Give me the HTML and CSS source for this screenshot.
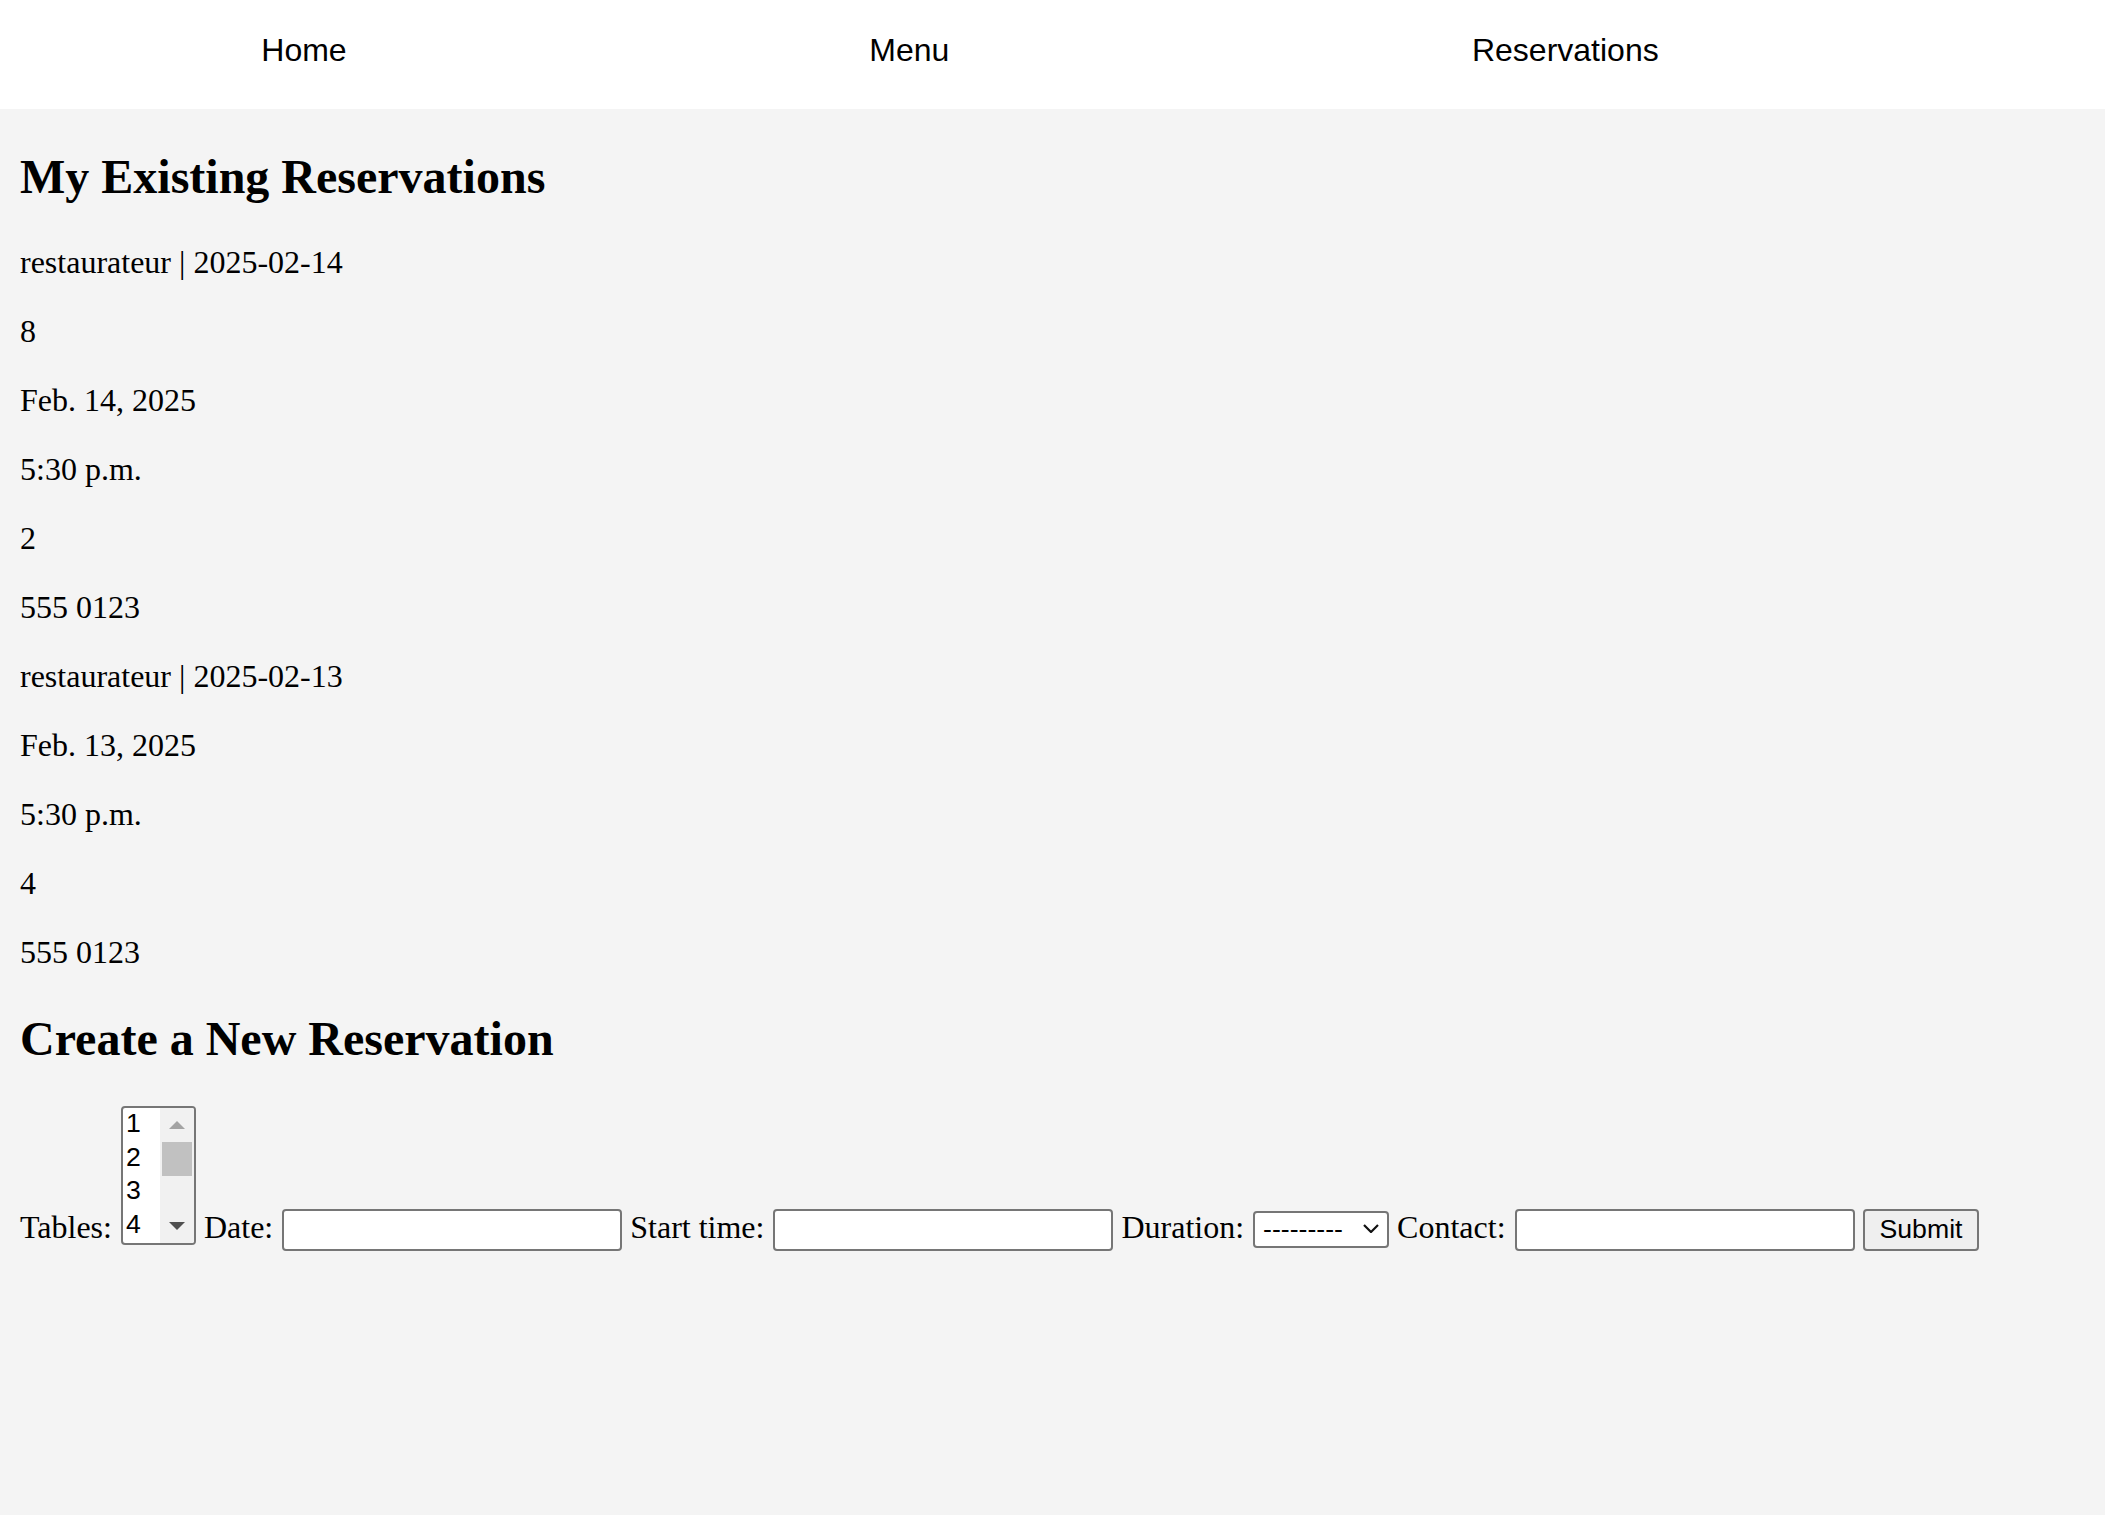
FILE: index.html
```html
<!DOCTYPE html>
<html lang="en">
<head>
<meta charset="utf-8">
<title>Reservations</title>
<link rel="stylesheet" href="styles.css">
</head>
<body>
<nav class="site-nav">
  <ul class="nav-list">
    <li class="nav-item"><a class="nav-link" href="#">Home</a></li>
    <li class="nav-item"><a class="nav-link" href="#">Menu</a></li>
    <li class="nav-item"><a class="nav-link" href="#">Reservations</a></li>
  </ul>
</nav>
<main class="content">
  <h2 class="section-title">My Existing Reservations</h2>
  <p class="entry">restaurateur | 2025-02-14</p>
  <p class="entry">8</p>
  <p class="entry">Feb. 14, 2025</p>
  <p class="entry">5:30 p.m.</p>
  <p class="entry">2</p>
  <p class="entry">555 0123</p>
  <p class="entry">restaurateur | 2025-02-13</p>
  <p class="entry">Feb. 13, 2025</p>
  <p class="entry">5:30 p.m.</p>
  <p class="entry">4</p>
  <p class="entry">555 0123</p>
  <h2 class="section-title">Create a New Reservation</h2>
  <form class="res-form">
    <label class="field-label">Tables:</label>
    <div class="listbox" role="listbox" aria-multiselectable="true"><div class="listbox-inner"><div class="listbox-options"><div class="listbox-option">1</div><div class="listbox-option">2</div><div class="listbox-option">3</div><div class="listbox-option">4</div></div><div class="listbox-scrollbar"><div class="sb-button"><svg width="16" height="8" viewBox="0 0 16 8"><polygon points="8,0 16,8 0,8" fill="#a3a3a3"/></svg></div><div class="sb-thumb"></div><div class="sb-track"></div><div class="sb-button"><svg width="16" height="8" viewBox="0 0 16 8"><polygon points="0,0 16,0 8,8" fill="#505050"/></svg></div></div></div></div>
    <label class="field-label">Date:</label>
    <input class="text-input" type="text">
    <label class="field-label">Start time:</label>
    <input class="text-input" type="text">
    <label class="field-label">Duration:</label>
    <span class="select-wrap"><select class="select-input"><option>---------</option></select><svg class="select-chevron" width="16" height="9" viewBox="0 0 16 9"><polyline points="1,1 8,8 15,1" fill="none" stroke="#111" stroke-width="2.2"/></svg></span>
    <label class="field-label">Contact:</label>
    <input class="text-input" type="text">
    <button class="submit-btn" type="submit">Submit</button>
  </form>
</main>
</body>
</html>
```

FILE: styles.css
```css
html, body {
  margin: 0;
  padding: 0;
}

body {
  background: #f4f4f4;
  color: #000;
  font-family: "Liberation Serif", "Times New Roman", serif;
  font-size: 32px;
  min-height: 1515px;
}

.site-nav {
  background: #ffffff;
  height: 109px;
  box-sizing: border-box;
  padding-top: 32px;
}

.nav-list {
  list-style: none;
  margin: 0;
  padding: 0;
  max-width: 1920px;
  display: flex;
  justify-content: space-around;
}

.nav-item {
  font-family: "Liberation Sans", Arial, sans-serif;
  font-size: 32px;
  line-height: 37px;
}

.nav-link {
  color: #000;
  text-decoration: none;
}

.content {
  padding: 0 20px;
}

.section-title {
  font-size: 48px;
  font-weight: bold;
  line-height: 55px;
  margin: 40px 0;
}

.entry {
  margin: 32px 0;
  line-height: 37px;
}

.res-form {
  margin: 0;
  line-height: 37px;
  white-space: nowrap;
}

.field-label {
  margin-right: 1px;
}

.listbox {
  display: inline-block;
  vertical-align: -7px;
  overflow: hidden;
  width: 75px;
  height: 139px;
  box-sizing: border-box;
  border: 2px solid #767676;
  border-radius: 4px;
  background: #ffffff;
}

.listbox-inner {
  display: flex;
  height: 100%;
}

.listbox-options {
  width: 37px;
  overflow: hidden;
  font-family: "Liberation Sans", Arial, sans-serif;
  font-size: 26.67px;
}

.listbox-option {
  height: 33.6px;
  line-height: 31.6px;
  padding: 0 0 0 3px;
  box-sizing: border-box;
}

.listbox-scrollbar {
  width: 34px;
  background: #f1f1f1;
  display: flex;
  flex-direction: column;
}

.sb-button {
  height: 34px;
  flex: none;
  display: flex;
  align-items: center;
  justify-content: center;
}

.sb-thumb {
  height: 34px;
  flex: none;
  margin: 0 2px;
  background: #c1c1c1;
}

.sb-track {
  flex: 1;
}

.text-input {
  box-sizing: border-box;
  width: 340px;
  height: 42px;
  margin: 0;
  padding: 0 6px;
  border: 2px solid #767676;
  border-radius: 4px;
  background: #ffffff;
  font-family: "Liberation Sans", Arial, sans-serif;
  font-size: 26.67px;
  vertical-align: baseline;
}

.select-wrap {
  position: relative;
  display: inline-block;
}

.select-input {
  -webkit-appearance: none;
  appearance: none;
  box-sizing: border-box;
  width: 136px;
  height: 37px;
  margin: 0;
  padding: 0 0 0 8px;
  border: 2px solid #767676;
  border-radius: 4px;
  background: #ffffff;
  color: #000;
  font-family: "Liberation Sans", Arial, sans-serif;
  font-size: 26.67px;
}

.select-chevron {
  position: absolute;
  right: 10px;
  top: 15px;
  pointer-events: none;
}

.submit-btn {
  box-sizing: border-box;
  height: 42px;
  margin: 0;
  padding: 0 15px;
  border: 2px solid #767676;
  border-radius: 4px;
  background: #efefef;
  color: #000;
  font-family: "Liberation Sans", Arial, sans-serif;
  font-size: 26.67px;
}
```
